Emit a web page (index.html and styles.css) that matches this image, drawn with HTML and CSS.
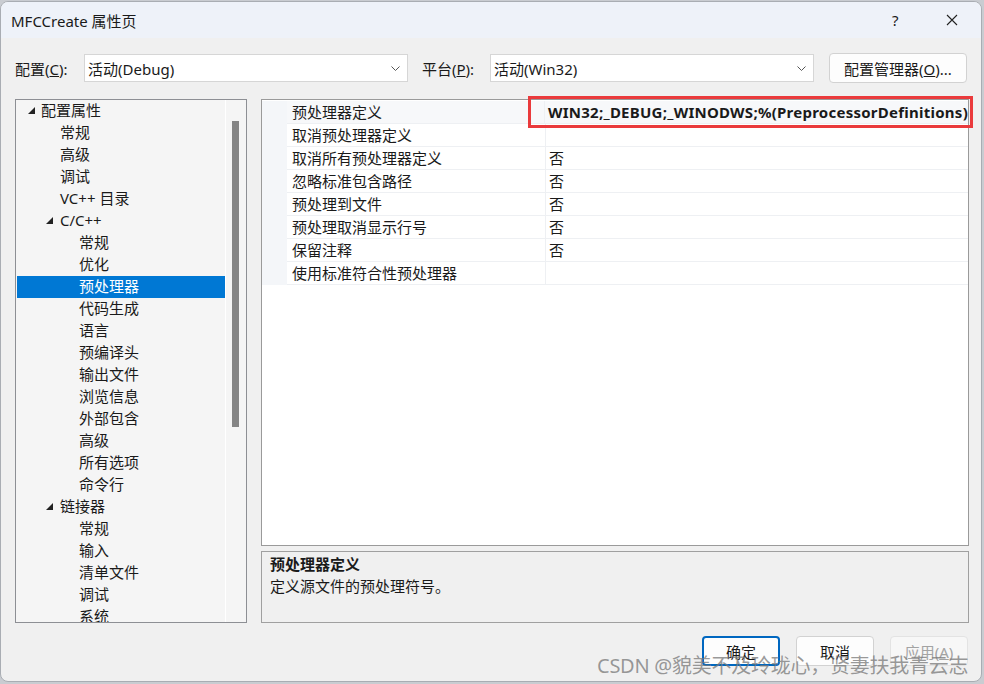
FILE: index.html
```html
<!DOCTYPE html>
<html lang="zh-CN">
<head>
  <meta charset="UTF-8" />
  <title>MFCCreate 属性页</title>
  <link rel="stylesheet" href="styles.css">
</head>
<body>

  <div class="window">
    <div class="titlebar">
      <span class="title">MFCCreate 属性页</span>
      <span class="help">?</span>
      <span class="close">
        <svg width="12" height="12" viewBox="0 0 12 12"><path d="M1 1 L11 11 M11 1 L1 11" stroke="#222" stroke-width="1.1" fill="none"/></svg>
      </span>
    </div>

    <div class="toolbar">
      <label class="lbl">配置(<u>C</u>):</label>
      <div class="combo">
        <span>活动(Debug)</span>
        <svg width="9" height="5" viewBox="0 0 9 5"><path d="M0.5 0.5 L4.5 4.5 L8.5 0.5" stroke="#555" fill="none"/></svg>
      </div>
      <label class="lbl lbl-platform">平台(<u>P</u>):</label>
      <div class="combo">
        <span>活动(Win32)</span>
        <svg width="9" height="5" viewBox="0 0 9 5"><path d="M0.5 0.5 L4.5 4.5 L8.5 0.5" stroke="#555" fill="none"/></svg>
      </div>
      <button class="btn btn-manager">配置管理器(<u>O</u>)...</button>
    </div>

    <div class="main">
      <!-- 左侧树 -->
      <div class="tree">
        <ul class="tree-list">
          <li class="lv0"><i class="tri"></i>配置属性</li>
          <li class="lv1">常规</li>
          <li class="lv1">高级</li>
          <li class="lv1">调试</li>
          <li class="lv1">VC++ 目录</li>
          <li class="lv1 open"><i class="tri"></i>C/C++</li>
          <li class="lv2">常规</li>
          <li class="lv2">优化</li>
          <li class="lv2 selected">预处理器</li>
          <li class="lv2">代码生成</li>
          <li class="lv2">语言</li>
          <li class="lv2">预编译头</li>
          <li class="lv2">输出文件</li>
          <li class="lv2">浏览信息</li>
          <li class="lv2">外部包含</li>
          <li class="lv2">高级</li>
          <li class="lv2">所有选项</li>
          <li class="lv2">命令行</li>
          <li class="lv1 open"><i class="tri"></i>链接器</li>
          <li class="lv2">常规</li>
          <li class="lv2">输入</li>
          <li class="lv2">清单文件</li>
          <li class="lv2">调试</li>
          <li class="lv2">系统</li>
        </ul>
        <div class="scroll"><div class="thumb"></div></div>
      </div>

      <div class="right">
        <div class="grid-wrap">
          <div class="grid">
            <div class="row first">
              <div class="gutter"></div>
              <div class="name">预处理器定义</div>
              <div class="value bold">WIN32;_DEBUG;_WINODWS;%(PreprocessorDefinitions)</div>
            </div>
            <div class="row"><div class="gutter"></div><div class="name">取消预处理器定义</div><div class="value"></div></div>
            <div class="row"><div class="gutter"></div><div class="name">取消所有预处理器定义</div><div class="value">否</div></div>
            <div class="row"><div class="gutter"></div><div class="name">忽略标准包含路径</div><div class="value">否</div></div>
            <div class="row"><div class="gutter"></div><div class="name">预处理到文件</div><div class="value">否</div></div>
            <div class="row"><div class="gutter"></div><div class="name">预处理取消显示行号</div><div class="value">否</div></div>
            <div class="row"><div class="gutter"></div><div class="name">保留注释</div><div class="value">否</div></div>
            <div class="row"><div class="gutter"></div><div class="name">使用标准符合性预处理器</div><div class="value"></div></div>
          </div>
          <div class="highlight"></div>
        </div>

        <div class="desc">
          <div class="desc-title">预处理器定义</div>
          <div class="desc-text">定义源文件的预处理符号。</div>
        </div>
      </div>
    </div>

    <div class="actions">
      <button class="btn btn-ok">确定</button>
      <button class="btn">取消</button>
      <button class="btn btn-disabled">应用(<u>A</u>)</button>
    </div>

    <div class="watermark">CSDN @貌美不及玲珑心，贤妻扶我青云志</div>
  </div>

</body>
</html>
```

FILE: styles.css
```css
body {
  margin: 0;
  padding: 0;
  background: #c9ccd1;
  font-family: "Noto Sans", "Noto Sans CJK SC", sans-serif;
  font-size: 14px;
  color: #1a1a1a;
}

.window {
  position: relative;
  margin-top: 1px;
  width: 980px;
  height: 679px;
  background: #f0f0f0;
  border: 1px solid #a9adb3;
  border-radius: 8px;
  overflow: hidden;
}

/* === 标题栏 === */
.titlebar {
  height: 36px;
  background: #eef2f9;
  display: flex;
  align-items: center;
  padding-left: 10px;
}

.title {
  font-size: 15px;
  flex: 1;
}

.help {
  font-size: 15px;
  width: 31px;
}

.close {
  width: 58px;
  display: flex;
  justify-content: center;
}

/* === 配置 / 平台 === */
.toolbar {
  display: flex;
  align-items: center;
  margin-top: 15px;
  padding-left: 14px;
  height: 30px;
}

.lbl {
  font-size: 15px;
  width: 69px;
}

.lbl-platform {
  margin-left: 14px;
  width: 68px;
}

.combo {
  width: 324px;
  height: 28px;
  background: #fff;
  border: 1px solid #d6d6d6;
  display: flex;
  align-items: center;
  justify-content: space-between;
  padding: 0 7px 0 3px;
  box-sizing: border-box;
  font-size: 15px;
}

.btn {
  font-family: inherit;
  font-size: 15px;
  color: #1a1a1a;
  background: #fdfdfd;
  border: 1px solid #d2d2d2;
  border-radius: 4px;
  height: 30px;
  padding: 0;
}

.btn-manager {
  margin-left: 15px;
  width: 138px;
}

/* === 主体 === */
.main {
  display: flex;
  margin-top: 16px;
  padding-left: 14px;
  gap: 14px;
}

.tree {
  width: 232px;
  height: 524px;
  border: 1px solid #8d8f94;
  box-sizing: border-box;
  background: #f5f5f5;
  display: flex;
  overflow: hidden;
}

.tree-list {
  list-style: none;
  margin: 0;
  padding: 0 0 0 1px;
  flex: 1;
}

.tree-list li {
  height: 22px;
  line-height: 21px;
  font-size: 15px;
  white-space: nowrap;
  position: relative;
}

.lv0 { padding-left: 24px; }
.lv1 { padding-left: 43px; }
.lv2 { padding-left: 62px; }

.tri {
  position: absolute;
  top: 7px;
  width: 0;
  height: 0;
  border-left: 7px solid transparent;
  border-bottom: 7px solid #222;
}

.lv0 .tri { left: 11px; }
.lv1 .tri { left: 29px; }

.tree-list li.selected {
  background: #0078d4;
  color: #fff;
}

.scroll {
  width: 20px;
  border-left: 1px solid #fff;
  padding-top: 21px;
}

.thumb {
  width: 7px;
  height: 306px;
  margin-left: 6px;
  background: #858585;
}

.right {
  width: 708px;
  display: flex;
  flex-direction: column;
}

/* === 属性表 === */
.grid-wrap {
  position: relative;
}

.grid {
  height: 447px;
  background: #fff;
  border: 1px solid #9a9a9a;
  box-sizing: border-box;
  padding-top: 1px;
}

.row {
  display: flex;
  height: 23px;
  line-height: 22px;
  font-size: 15px;
}

.gutter {
  width: 25px;
  background: #f4f6f9;
}

.name {
  width: 253px;
  padding-left: 5px;
  border-bottom: 1px solid #eef0f3;
  border-right: 1px solid #eef0f3;
  white-space: nowrap;
}

.value {
  flex: 1;
  padding-left: 3px;
  border-bottom: 1px solid #eef0f3;
  white-space: nowrap;
}

.first .name,
.first .value {
  background: #f7f8fa;
}

.bold {
  font-weight: bold;
  letter-spacing: 0.25px;
}

.highlight {
  position: absolute;
  left: 267px;
  top: -3px;
  width: 445px;
  height: 32px;
  border: 3px solid #ea3a3c;
  box-sizing: border-box;
}

.desc {
  margin-top: 5px;
  height: 72px;
  border: 1px solid #a0a0a0;
  box-sizing: border-box;
  padding: 1px 8px;
  font-size: 15px;
}

.desc-title {
  font-weight: bold;
  line-height: 22px;
}

.desc-text {
  line-height: 23px;
}

/* === 底部按钮 === */
.actions {
  display: flex;
  justify-content: flex-end;
  gap: 16px;
  margin-top: 13px;
  padding-right: 13px;
}

.actions .btn {
  width: 78px;
}

.btn-ok {
  border: 2px solid #0067c0;
}

.btn-disabled {
  color: #a3a3a3;
  background: #f7f7f7;
  border-color: #e3e3e3;
}

.watermark {
  position: absolute;
  left: 596px;
  top: 648px;
  font-size: 20px;
  letter-spacing: -0.25px;
  color: rgba(120, 120, 120, 0.75);
  white-space: nowrap;
}
```
